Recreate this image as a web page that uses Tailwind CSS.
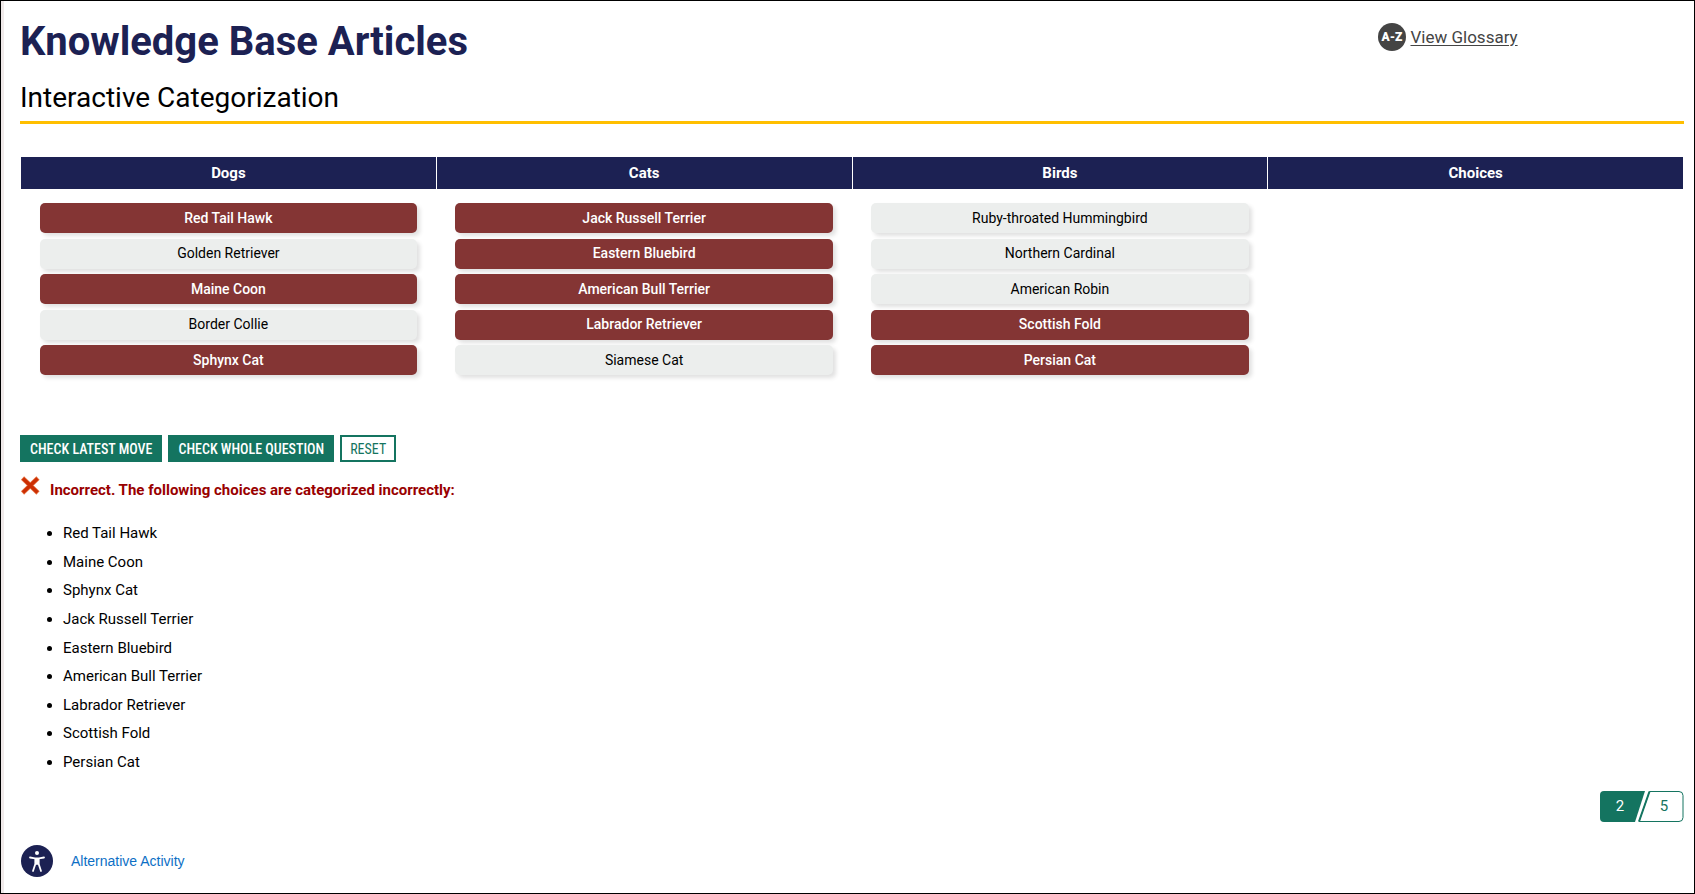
<!DOCTYPE html>
<html lang="en">
<head>
  <meta charset="UTF-8" />
  <meta name="viewport" content="width=device-width, initial-scale=1.0" />
  <title>Knowledge Base Articles</title>
  <script src="https://cdn.jsdelivr.net/npm/@tailwindcss/browser@4"></script>
</head>
<body class="min-h-screen bg-white border border-black font-['Roboto',sans-serif] text-black flex flex-col">
  <div class="grow flex flex-col border-l-3 border-[#f0eaea] pl-4 pr-[10px]">

    <!-- Header -->
    <header class="border-b-3 border-[#ffbf00] pt-[17px] pb-[7px]">
      <div class="flex items-start justify-between">
        <h1 class="text-[40px] leading-12 font-bold text-[#1c2153]">Knowledge Base Articles</h1>
        <a href="#glossary" class="flex items-center gap-1 mt-[5px] mr-[10%] text-[17px] leading-7 text-[#444]">
          <svg class="w-7 h-7" viewBox="0 0 28 28" aria-hidden="true">
            <circle cx="14" cy="14" r="14" fill="#444" />
            <text x="14" y="18" text-anchor="middle" font-size="12" font-weight="900" fill="#fff">A-Z</text>
          </svg>
          <span class="underline underline-offset-2">View Glossary</span>
        </a>
      </div>
      <h2 class="mt-4 text-[28px] leading-8">Interactive Categorization</h2>
    </header>

    <main>
      <!-- Categories -->
      <table class="mt-8 w-full table-fixed border-collapse">
        <thead>
          <tr class="h-[33px] bg-[#1c2153] text-white text-[15px] leading-5">
            <th class="border border-white font-bold">Dogs</th>
            <th class="border border-white font-bold">Cats</th>
            <th class="border border-white font-bold">Birds</th>
            <th class="border border-white font-bold">Choices</th>
          </tr>
        </thead>
        <tbody>
          <tr class="align-top text-[14px] leading-5">
            <td class="px-[19px] pt-[13px]">
              <div class="flex flex-col justify-between h-[172px]">
                <button class="h-[30px] pb-px rounded-[5px] bg-[#843534] text-white font-medium shadow-[3px_3px_4px_#0000001f]">Red Tail Hawk</button>
                <button class="h-[30px] pb-px rounded-[5px] bg-[#eceeed] shadow-[3px_3px_4px_#0000001f]">Golden Retriever</button>
                <button class="h-[30px] pb-px rounded-[5px] bg-[#843534] text-white font-medium shadow-[3px_3px_4px_#0000001f]">Maine Coon</button>
                <button class="h-[30px] pb-px rounded-[5px] bg-[#eceeed] shadow-[3px_3px_4px_#0000001f]">Border Collie</button>
                <button class="h-[30px] pb-px rounded-[5px] bg-[#843534] text-white font-medium shadow-[3px_3px_4px_#0000001f]">Sphynx Cat</button>
              </div>
            </td>
            <td class="px-[19px] pt-[13px]">
              <div class="flex flex-col justify-between h-[172px]">
                <button class="h-[30px] pb-px rounded-[5px] bg-[#843534] text-white font-medium shadow-[3px_3px_4px_#0000001f]">Jack Russell Terrier</button>
                <button class="h-[30px] pb-px rounded-[5px] bg-[#843534] text-white font-medium shadow-[3px_3px_4px_#0000001f]">Eastern Bluebird</button>
                <button class="h-[30px] pb-px rounded-[5px] bg-[#843534] text-white font-medium shadow-[3px_3px_4px_#0000001f]">American Bull Terrier</button>
                <button class="h-[30px] pb-px rounded-[5px] bg-[#843534] text-white font-medium shadow-[3px_3px_4px_#0000001f]">Labrador Retriever</button>
                <button class="h-[30px] pb-px rounded-[5px] bg-[#eceeed] shadow-[3px_3px_4px_#0000001f]">Siamese Cat</button>
              </div>
            </td>
            <td class="px-[19px] pt-[13px]">
              <div class="flex flex-col justify-between h-[172px]">
                <button class="h-[30px] pb-px rounded-[5px] bg-[#eceeed] shadow-[3px_3px_4px_#0000001f]">Ruby-throated Hummingbird</button>
                <button class="h-[30px] pb-px rounded-[5px] bg-[#eceeed] shadow-[3px_3px_4px_#0000001f]">Northern Cardinal</button>
                <button class="h-[30px] pb-px rounded-[5px] bg-[#eceeed] shadow-[3px_3px_4px_#0000001f]">American Robin</button>
                <button class="h-[30px] pb-px rounded-[5px] bg-[#843534] text-white font-medium shadow-[3px_3px_4px_#0000001f]">Scottish Fold</button>
                <button class="h-[30px] pb-px rounded-[5px] bg-[#843534] text-white font-medium shadow-[3px_3px_4px_#0000001f]">Persian Cat</button>
              </div>
            </td>
            <td></td>
          </tr>
        </tbody>
      </table>

      <!-- Actions -->
      <div class="mt-15 flex gap-[6px] font-['Roboto_Condensed','Roboto',sans-serif] text-[14px] leading-[22px]">
        <button class="border-2 border-[#147460] bg-[#147460] px-2 pt-px font-medium text-white">CHECK LATEST MOVE</button>
        <button class="border-2 border-[#147460] bg-[#147460] px-2 pt-px font-medium text-white">CHECK WHOLE QUESTION</button>
        <button class="border-2 border-[#147460] px-2 pt-px text-[#147460]">RESET</button>
      </div>

      <!-- Feedback -->
      <div class="mt-4 flex items-start gap-[10px] text-[15px] leading-6 text-[#990000]">
        <svg class="w-5 h-5 -mt-[3px]" viewBox="0 0 20 20" fill="none" aria-hidden="true">
          <path d="M2.500 3 18 18M18 3 2.500 18" stroke="#e8794a" stroke-width="4.600" />
          <path d="M3 3.500 17.500 17.500M17.500 3.500 3 17.500" stroke="#cc2f04" stroke-width="3.400" />
        </svg>
        <p class="font-bold">Incorrect. The following choices are categorized incorrectly:</p>
      </div>
      <ul class="mt-[17px] flex flex-col justify-between h-[257px] list-disc pl-[43px] text-[15px] leading-7">
        <li>Red Tail Hawk</li>
        <li>Maine Coon</li>
        <li>Sphynx Cat</li>
        <li>Jack Russell Terrier</li>
        <li>Eastern Bluebird</li>
        <li>American Bull Terrier</li>
        <li>Labrador Retriever</li>
        <li>Scottish Fold</li>
        <li>Persian Cat</li>
      </ul>
    </main>

    <!-- Footer -->
    <footer class="mt-auto pb-4">
      <div class="flex justify-end">
        <svg class="w-[84px] h-8" viewBox="0 0 84 32" font-size="15" role="img" aria-label="Page 2 of 5">
          <path d="M4 0H45L35 31H4a4 4 0 0 1-4-4V4a4 4 0 0 1 4-4Z" fill="#147460" />
          <path d="M49.500 .5H79a4 4 0 0 1 4 4V26.500a4 4 0 0 1-4 4H39Z" fill="#fff" stroke="#147460" />
          <path d="M49.500 .5 39 30.500" stroke="#147460" stroke-width="2" />
          <text x="20" y="20" text-anchor="middle" fill="#fff">2</text>
          <text x="64" y="20" text-anchor="middle" fill="#147460">5</text>
        </svg>
      </div>
      <div class="mt-[22px] pl-px flex items-center gap-[18px]">
        <svg class="w-8 h-8" viewBox="0 0 32 32" aria-hidden="true">
          <circle cx="16" cy="16" r="16" fill="#1c2153" />
          <circle cx="16" cy="8" r="2" fill="#fff" />
          <path d="M9 12.500 14 13.300H18L23 12.500M14.300 14V19L12 26M17.700 14V19L20 26M16 14V19" stroke="#fff" stroke-width="1.800" fill="none" stroke-linecap="round" />
        </svg>
        <a href="#alternative" class="font-['Liberation_Sans',sans-serif] text-[14px] leading-5 text-[#0d6fc5]">Alternative Activity</a>
      </div>
    </footer>

  </div>
</body>
</html>
